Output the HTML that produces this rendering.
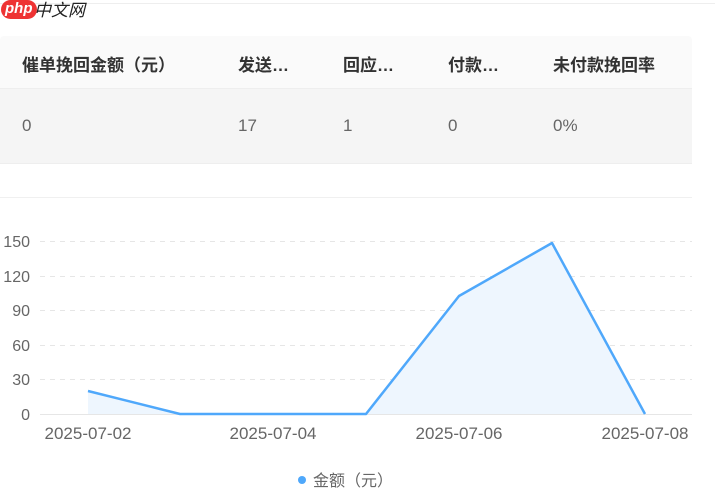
<!DOCTYPE html>
<html><head><meta charset="utf-8"><style>
body{margin:0;width:715px;height:496px;background:#fff;font-family:"Liberation Sans","Noto Sans CJK SC",sans-serif;position:relative;overflow:hidden}
.a{position:absolute}
.h{font-size:17px;font-weight:bold;color:#333;top:51px}
.c{font-size:17px;color:#666;top:116px}
</style></head><body>
<div class="a" style="left:0;top:3px;width:715px;height:1px;background:#eee"></div>
<div class="a" style="left:1px;top:0;font:italic bold 15px 'Liberation Sans';color:#fff;background:#e33;border-radius:10px;padding:0 4px;height:19px;line-height:18px">php</div>
<div class="a" style="left:34px;top:-1px;font:italic 17px 'Noto Sans CJK SC',sans-serif;color:#222;line-height:19px">中文网</div>
<div class="a" style="left:0;top:36px;width:692px;height:52px;background:#fafafa;border-radius:4px 4px 0 0;border-bottom:1px solid #eee"></div>
<div class="a" style="left:0;top:89px;width:692px;height:74px;background:#f5f5f5;border-bottom:1px solid #eee"></div>
<div class="a h" style="left:22px">催单挽回金额（元）</div>
<div class="a h" style="left:238px">发送…</div>
<div class="a h" style="left:343px">回应…</div>
<div class="a h" style="left:448px">付款…</div>
<div class="a h" style="left:553px">未付款挽回率</div>
<div class="a c" style="left:22px">0</div>
<div class="a c" style="left:238px">17</div>
<div class="a c" style="left:343px">1</div>
<div class="a c" style="left:448px">0</div>
<div class="a c" style="left:553px">0%</div>
<div class="a" style="left:0;top:197px;width:692px;height:1px;background:#f0f0f0"></div>
<svg class="a" style="left:0;top:0" width="715" height="496">
<g stroke="#e6e6e6" stroke-dasharray="5,5">
<line x1="40" x2="692" y1="241.5" y2="241.5"/><line x1="40" x2="692" y1="276.5" y2="276.5"/><line x1="40" x2="692" y1="310.5" y2="310.5"/><line x1="40" x2="692" y1="345.5" y2="345.5"/><line x1="40" x2="692" y1="379.5" y2="379.5"/></g>
<line x1="40" x2="692" y1="414.5" y2="414.5" stroke="#e6e6e6"/>
<g font-family="Liberation Sans" font-size="16" fill="#666" text-anchor="end">
<text x="30" y="247">150</text><text x="30" y="282">120</text><text x="30" y="316">90</text><text x="30" y="351">60</text><text x="30" y="385">30</text><text x="30" y="420">0</text></g>
<g font-family="Liberation Sans" font-size="17" fill="#666" text-anchor="middle">
<text x="88" y="439">2025-07-02</text><text x="273" y="439">2025-07-04</text><text x="459" y="439">2025-07-06</text><text x="645" y="439">2025-07-08</text></g>
<path d="M88 414L88 391L180 414L273 414L366 414L459 296L552 243L645 414Z" fill="#eef6fe"/>
<path d="M88 391L180 414L273 414L366 414L459 296L552 243L645 414" fill="none" stroke="#4fa8fb" stroke-width="2.5" stroke-linejoin="round"/>
<circle cx="302" cy="480" r="4" fill="#4fa8fb"/>
<text x="313" y="486" font-family="Liberation Sans,Noto Sans CJK SC,sans-serif" font-size="16" fill="#666">金额（元）</text>
</svg>
</body></html>
